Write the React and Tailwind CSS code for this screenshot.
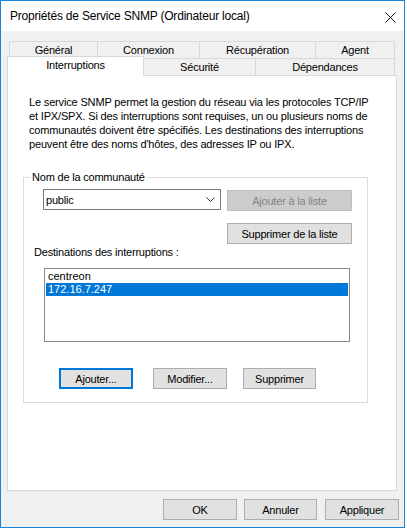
export default function App() {
  const tab = "border-t border-l border-[#d9d9d9] bg-[#f0f0f0] flex items-center justify-center";
  const btn = "h-[21px] border border-[#adadad] bg-[#e1e1e1] flex items-center justify-center";
  return (
    <div className="w-[407px] h-[530px] bg-white font-['Liberation_Sans',Arial,sans-serif] text-[11px] leading-[14px] tracking-[-0.2px] text-black">
      <div className="w-[405px] h-[528px] border border-[#1883d7] bg-[#f0f0f0] flex flex-col">
        {/* title bar */}
        <div className="h-[30px] shrink-0 bg-white flex items-center pl-[9px] pr-[8px]">
          <span className="flex-1 text-[12px] tracking-[-0.2px]">Propriétés de Service SNMP (Ordinateur local)</span>
          <svg width="11" height="11" viewBox="0 0 11 11" className="mt-[2px]">
            <path d="M0.5 0.5 L10.5 10.5 M10.5 0.5 L0.5 10.5" stroke="#111" strokeWidth="1" fill="none" />
          </svg>
        </div>

        {/* body */}
        <div className="flex flex-col pl-[6px] pr-[7px] pt-[10px]">
          {/* tab row 1 */}
          <div className="flex ml-[2px] h-[17px]">
            <div className={`${tab} w-[88px]`}>Général</div>
            <div className={`${tab} w-[102px]`}>Connexion</div>
            <div className={`${tab} w-[116px]`}>Récupération</div>
            <div className={`${tab} w-[80px] border-r`}>Agent</div>
          </div>
          {/* tab row 2 */}
          <div className="flex items-end h-[19px] -mt-[2px] relative z-10">
            <div className="w-[137px] h-[20px] -mb-px bg-white border-t border-l border-r border-[#d9d9d9] flex justify-center pt-[1px]">
              Interruptions
            </div>
            <div className="w-[112px] h-[17px] border-t border-r border-[#d9d9d9] bg-[#f0f0f0] flex items-center justify-center">
              Sécurité
            </div>
            <div className="w-[139px] h-[17px] border-t border-r border-[#d9d9d9] bg-[#f0f0f0] flex items-center justify-center">
              Dépendances
            </div>
          </div>

          {/* panel */}
          <div className="h-[416px] border border-[#d9d9d9] bg-white flex flex-col pt-[19px]">
            <p className="pl-[21px] tracking-[-0.16px]">
              Le service SNMP permet la gestion du réseau via les protocoles TCP/IP<br />
              et IPX/SPX. Si des interruptions sont requises, un ou plusieurs noms de<br />
              communautés doivent être spécifiés. Les destinations des interruptions<br />
              peuvent être des noms d'hôtes, des adresses IP ou IPX.
            </p>

            {/* group box */}
            <div className="relative ml-[15px] mt-[26px] w-[345px] h-[226px] border border-[#dcdcdc] flex flex-col">
              <span className="absolute left-[6px] -top-[8px] bg-white px-[2px]">Nom de la communauté</span>

              <div className="flex mt-[11px] ml-[19px]">
                <div className="w-[178px] h-[21px] border border-[#7a7a7a] bg-white flex items-center pl-[2px] pr-[5px]">
                  <span className="flex-1">public</span>
                  <svg width="9" height="5" viewBox="0 0 9 5">
                    <path d="M0.5 0.5 L4.5 4.5 L8.5 0.5" stroke="#333" strokeWidth="1" fill="none" />
                  </svg>
                </div>
                <div className="ml-[6px] mt-[1px] w-[125px] h-[21px] border border-[#bfbfbf] bg-[#cccccc] text-[#838383] flex items-center justify-center">
                  Ajouter à la liste
                </div>
              </div>

              <div className={`${btn} ml-[203px] mt-[12px] w-[125px]`}>Supprimer de la liste</div>

              <div className="ml-[10px] mt-[1px]">Destinations des interruptions :</div>

              <div className="ml-[20px] mt-[9px] w-[306px] h-[74px] border border-[#828790] bg-white flex flex-col pt-[1px] pl-px pr-px tracking-normal">
                <div className="h-[13px] leading-[13px] pl-[2px]">centreon</div>
                <div className="h-[13px] leading-[13px] pl-[2px] bg-[#0078d7] text-white">172.16.7.247</div>
              </div>

              <div className="flex mt-[26px] ml-[35px]">
                <div className="w-[74px] h-[21px] border-2 border-[#0078d7] bg-[#e1e1e1] flex items-center justify-center">Ajouter...</div>
                <div className={`${btn} w-[74px] ml-[20px]`}>Modifier...</div>
                <div className={`${btn} w-[73px] ml-[16px]`}>Supprimer</div>
              </div>
            </div>
          </div>

          {/* bottom buttons */}
          <div className="flex justify-end mt-[8px]">
            <div className={`${btn} w-[74px]`}>OK</div>
            <div className={`${btn} w-[73px] ml-[7px]`}>Annuler</div>
            <div className={`${btn} w-[74px] ml-[8px] -mr-[2px]`}>Appliquer</div>
          </div>
        </div>
      </div>
    </div>
  );
}
